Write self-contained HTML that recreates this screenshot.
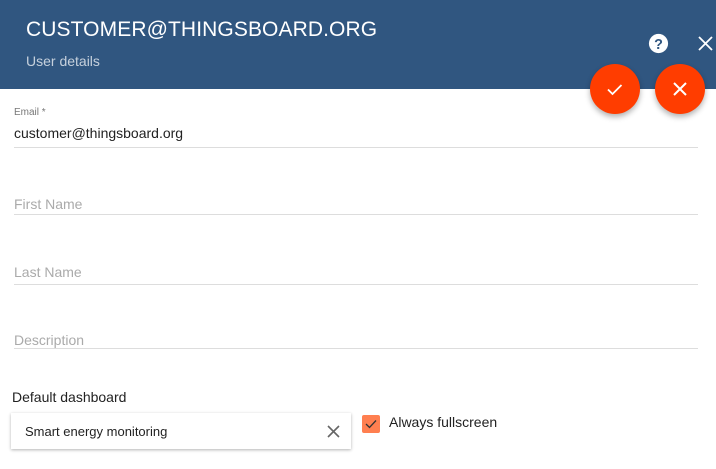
<!DOCTYPE html>
<html><head><style>
*{margin:0;padding:0;box-sizing:border-box}
body{width:716px;height:469px;overflow:hidden;background:#fff;font-family:"Liberation Sans",sans-serif;position:relative}
.hdr{position:absolute;left:0;top:0;width:716px;height:89px;background:#305680}
.t{position:absolute;color:#fff;font-size:21px;left:26px;top:18px;letter-spacing:0.1px}
.s{position:absolute;color:rgba(255,255,255,.72);font-size:14px;left:26px;top:53px}
.fab{position:absolute;top:64px;width:50px;height:50px;border-radius:50%;background:#ff3d00;box-shadow:0 3px 6px rgba(0,0,0,.3)}
.abs{position:absolute}
.line{position:absolute;left:14px;width:684px;height:1px;background:#ddd}
.ph{position:absolute;left:14px;font-size:14px;color:#aaa}
</style></head><body>
<div class="hdr">
<div class="t">CUSTOMER@THINGSBOARD.ORG</div>
<div class="s">User details</div>
<svg class="abs" style="left:647px;top:32px" width="23" height="23" viewBox="0 0 24 24"><circle cx="12" cy="12" r="10" fill="#fff"/><text x="12" y="17.5" text-anchor="middle" font-size="15" font-weight="bold" fill="#305680" font-family="Liberation Sans">?</text></svg>
<svg class="abs" style="left:698px;top:36px" width="15" height="15" viewBox="0 0 15 15"><path d="M1 1L14 14M14 1L1 14" stroke="#fff" stroke-width="1.8"/></svg>
</div>
<div class="fab" style="left:590px"><svg width="50" height="50"><path d="M18 25.5l4.5 4.5 9-9" stroke="#fff" stroke-width="1.8" fill="none"/></svg></div>
<div class="fab" style="left:655px"><svg width="50" height="50"><path d="M19 19l12 12M31 19l-12 12" stroke="#fff" stroke-width="2" fill="none"/></svg></div>
<div class="abs" style="left:14px;top:107px;font-size:10px;color:#777">Email *</div>
<div class="abs" style="left:14px;top:125px;font-size:14px;color:#222">customer@thingsboard.org</div>
<div class="line" style="top:147px"></div>
<div class="ph" style="top:196px">First Name</div>
<div class="line" style="top:214px"></div>
<div class="ph" style="top:264px">Last Name</div>
<div class="line" style="top:284px"></div>
<div class="ph" style="top:332px">Description</div>
<div class="line" style="top:348px"></div>
<div class="abs" style="left:12px;top:389px;font-size:14px;color:#222">Default dashboard</div>
<div class="abs" style="left:11px;top:413px;width:340px;height:36px;background:#fff;box-shadow:0 1px 3px rgba(0,0,0,.3)">
<div class="abs" style="left:14px;top:11px;font-size:13px;color:#222">Smart energy monitoring</div>
<svg class="abs" style="left:316px;top:12px" width="13" height="13"><path d="M1 1L12 12M12 1L1 12" stroke="#666" stroke-width="1.6"/></svg>
</div>
<div class="abs" style="left:362px;top:415px;width:18px;height:18px;background:#ff7f50;border-radius:2px"><svg width="18" height="18"><path d="M4 9l3.5 3.5 6.5-7" stroke="#333" stroke-width="1.3" fill="none"/></svg></div>
<div class="abs" style="left:389px;top:414px;font-size:14px;color:#222">Always fullscreen</div>
</body></html>
